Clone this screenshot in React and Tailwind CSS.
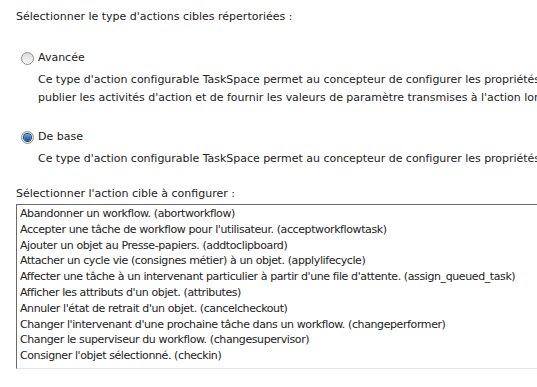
const items = [
  "Abandonner un workflow. (abortworkflow)",
  "Accepter une tâche de workflow pour l'utilisateur. (acceptworkflowtask)",
  "Ajouter un objet au Presse-papiers. (addtoclipboard)",
  "Attacher un cycle vie (consignes métier) à un objet. (applylifecycle)",
  "Affecter une tâche à un intervenant particulier à partir d'une file d'attente. (assign_queued_task)",
  "Afficher les attributs d'un objet. (attributes)",
  "Annuler l'état de retrait d'un objet. (cancelcheckout)",
  "Changer l'intervenant d'une prochaine tâche dans un workflow. (changeperformer)",
  "Changer le superviseur du workflow. (changesupervisor)",
  "Consigner l'objet sélectionné. (checkin)",
];

function Radio({ checked }) {
  return (
    <span className="flex h-[13px] w-[13px] shrink-0 items-center justify-center rounded-full border border-[#8f8f8f] bg-gradient-to-b from-[#dcdcdc] to-[#f8f8f8]">
      {checked && (
        <span className="h-[7px] w-[7px] rounded-full bg-gradient-to-b from-[#5fa8e8] to-[#0b4f9c] ring-1 ring-[#1d3f6a]" />
      )}
    </span>
  );
}

function Option({ label, checked, lines }) {
  return (
    <div>
      <div className="flex h-[18px] items-center gap-[4px] pl-[21px]">
        <Radio checked={checked} />
        <span>{label}</span>
      </div>
      <div className="mt-[4px] pl-[38px] tracking-[-0.03px]">
        {lines.map((l) => (
          <div key={l} className="h-[18px] whitespace-nowrap leading-[18px]">
            {l}
          </div>
        ))}
      </div>
    </div>
  );
}

export default function App() {
  return (
    <div className="h-[387px] w-[537px] overflow-hidden bg-white text-[11px] leading-[18px] text-[#222] [font-family:'DejaVu_Sans',sans-serif]">
      <div className="pl-[16px] pt-[8px]">
        <div className="whitespace-nowrap">Sélectionner le type d'actions cibles répertoriées :</div>
      </div>

      <div className="mt-[23px]">
        <Option
          label="Avancée"
          lines={[
            "Ce type d'action configurable TaskSpace permet au concepteur de configurer les propriétés",
            "publier les activités d'action et de fournir les valeurs de paramètre transmises à l'action lors",
          ]}
        />
      </div>

      <div className="mt-[21px]">
        <Option
          label="De base"
          checked
          lines={[
            "Ce type d'action configurable TaskSpace permet au concepteur de configurer les propriétés",
          ]}
        />
      </div>

      <div className="mt-[17px] pl-[16px]">
        <div className="h-[18px] whitespace-nowrap">Sélectionner l'action cible à configurer :</div>
        <div className="mt-[1px] w-[560px] border border-t-[#6a6a6a] border-l-[#6a6a6a] border-b-[#e6e6e6] border-r-[#e6e6e6] pb-[4px] pl-[3px] pt-[1px] tracking-[-0.4px]">
          {items.map((it) => (
            <div key={it} className="h-[15.8px] whitespace-nowrap leading-[15.8px]">
              {it}
            </div>
          ))}
        </div>
      </div>
    </div>
  );
}
